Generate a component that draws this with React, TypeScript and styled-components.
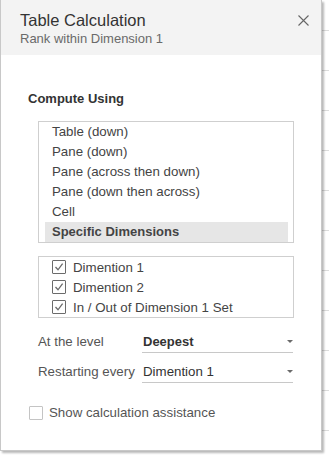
import styled, { createGlobalStyle } from "styled-components";

const GlobalStyle = createGlobalStyle`
  html, body {
    margin: 0;
    padding: 0;
    background: #ffffff;
  }
  body {
    font-family: "Liberation Sans", Arial, sans-serif;
    font-size: 13.3px;
    color: #333333;
  }
`;

const Backdrop = styled.div`
  width: 329px;
  height: 460px;
  overflow: hidden;
  background-color: #ffffff;
  background-image: repeating-linear-gradient(
    to bottom,
    transparent 0px,
    transparent 30px,
    #dcdcdc 30px,
    #dcdcdc 31px,
    transparent 31px,
    transparent 40px
  );
`;

const Dialog = styled.div`
  width: 320px;
  height: 450px;
  background: #ffffff;
  border: 1px solid #c8c8c8;
  border-top: none;
  box-shadow: 2px 2px 2px rgba(0, 0, 0, 0.28);
  display: flex;
  flex-direction: column;
`;

const Header = styled.div`
  height: 55px;
  box-sizing: border-box;
  background: #f3f3f3;
  padding: 10px 12px 0 19px;
  display: flex;
  justify-content: space-between;
  align-items: flex-start;
`;

const Titles = styled.div`
  display: flex;
  flex-direction: column;
`;

const Title = styled.div`
  font-size: 16.5px;
  line-height: 20px;
  color: #333333;
`;

const Subtitle = styled.div`
  font-size: 13px;
  line-height: 18px;
  color: #6a6a6a;
`;

const CloseButton = styled.button`
  border: none;
  background: none;
  padding: 0;
  margin-top: 5px;
  width: 11px;
  height: 11px;
  display: flex;
  cursor: pointer;
`;

const Body = styled.div`
  padding: 36px 0 0 27px;
  display: flex;
  flex-direction: column;
`;

const SectionLabel = styled.div`
  font-weight: bold;
  font-size: 13px;
  line-height: 16px;
  color: #333333;
`;

const ListBox = styled.div<{ $top: number }>`
  margin: ${(p) => p.$top}px 0 0 10px;
  width: 256px;
  box-sizing: border-box;
  border: 1px solid #cfcfcf;
  padding: 0 5px 0 6px;
  display: flex;
  flex-direction: column;
`;

const ListItem = styled.div<{ $selected?: boolean }>`
  height: 20px;
  line-height: 20px;
  padding-left: 7px;
  color: #444444;
  font-size: ${(p) => (p.$selected ? "13px" : "13.3px")};
  font-weight: ${(p) => (p.$selected ? "bold" : "normal")};
  background: ${(p) => (p.$selected ? "#e6e6e6" : "transparent")};
`;

const CheckRow = styled.div`
  height: 20px;
  display: flex;
  align-items: center;
  gap: 7px;
  padding-left: 7px;
  color: #444444;
`;

const Box = styled.span<{ $light?: boolean }>`
  width: 14px;
  height: 14px;
  box-sizing: border-box;
  border: 1px solid ${(p) => (p.$light ? "#c4c4c4" : "#6b6b6b")};
  border-radius: 1px;
  background: #ffffff;
  display: flex;
  align-items: center;
  justify-content: center;
  flex-shrink: 0;
`;

const Settings = styled.div`
  margin: 11px 0 0 10px;
  display: grid;
  grid-template-columns: 104px 151px;
  row-gap: 6px;
`;

const SettingLabel = styled.div`
  height: 24px;
  padding-top: 5px;
  box-sizing: border-box;
  line-height: 16px;
  color: #555555;
`;

const Dropdown = styled.div<{ $bold?: boolean }>`
  height: 24px;
  box-sizing: border-box;
  padding: 5px 0 0 1px;
  line-height: 16px;
  border-bottom: 1px solid #c8c8c8;
  display: flex;
  justify-content: space-between;
  color: #333333;
  font-size: ${(p) => (p.$bold ? "13px" : "13.3px")};
  font-weight: ${(p) => (p.$bold ? "bold" : "normal")};
`;

const Caret = styled.span`
  width: 0;
  height: 0;
  margin-top: 6px;
  border-left: 3px solid transparent;
  border-right: 3px solid transparent;
  border-top: 3px solid #6a6a6a;
`;

const AssistRow = styled.label`
  margin: 22px 0 0 1px;
  display: flex;
  align-items: center;
  gap: 6px;
  color: #555555;
  line-height: 16px;
`;

function Check() {
  return (
    <svg width="10" height="10" viewBox="0 0 10 10">
      <polyline points="1.5,5 4,7.8 8.6,1.6" fill="none" stroke="#6b6b6b" strokeWidth="1.3" />
    </svg>
  );
}

const options = [
  "Table (down)",
  "Pane (down)",
  "Pane (across then down)",
  "Pane (down then across)",
  "Cell",
  "Specific Dimensions",
];

const dims = ["Dimention 1", "Dimention 2", "In / Out of Dimension 1 Set"];

export default function App() {
  return (
    <>
      <GlobalStyle />
      <Backdrop>
        <Dialog>
          <Header>
            <Titles>
              <Title>Table Calculation</Title>
              <Subtitle>Rank within Dimension 1</Subtitle>
            </Titles>
            <CloseButton aria-label="Close">
              <svg width="11" height="11" viewBox="0 0 11 11">
                <path d="M0.5 0.5 L10.5 10.5 M10.5 0.5 L0.5 10.5" stroke="#666666" strokeWidth="1.1" />
              </svg>
            </CloseButton>
          </Header>
          <Body>
            <SectionLabel>Compute Using</SectionLabel>
            <ListBox $top={14}>
              {options.map((o) => (
                <ListItem key={o} $selected={o === "Specific Dimensions"}>
                  {o}
                </ListItem>
              ))}
            </ListBox>
            <ListBox $top={13}>
              {dims.map((d) => (
                <CheckRow key={d}>
                  <Box>
                    <Check />
                  </Box>
                  {d}
                </CheckRow>
              ))}
            </ListBox>
            <Settings>
              <SettingLabel>At the level</SettingLabel>
              <Dropdown $bold>
                Deepest
                <Caret />
              </Dropdown>
              <SettingLabel>Restarting every</SettingLabel>
              <Dropdown>
                Dimention 1
                <Caret />
              </Dropdown>
            </Settings>
            <AssistRow>
              <Box $light />
              Show calculation assistance
            </AssistRow>
          </Body>
        </Dialog>
      </Backdrop>
    </>
  );
}
